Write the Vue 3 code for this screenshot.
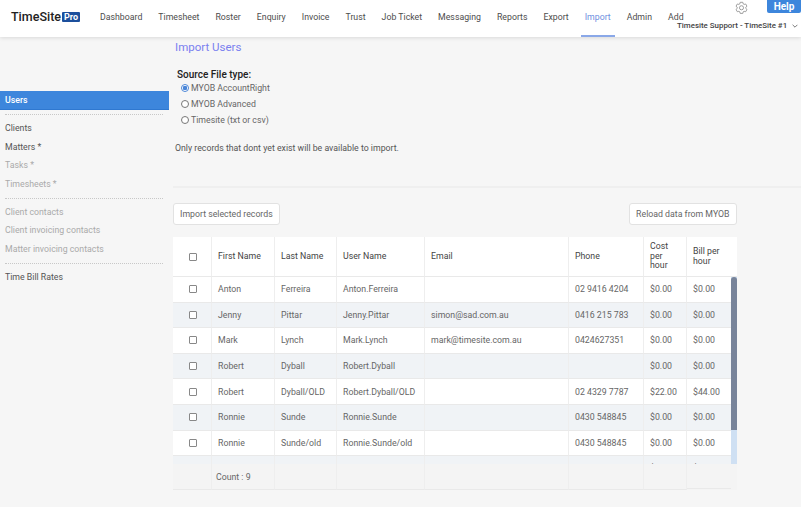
<template>
  <div class="page">
    <header class="topbar">
      <div class="logo">TimeSite<span class="logo-pro">Pro</span></div>
      <nav class="nav">
        <a v-for="item in navItems" :key="item" class="nav-item" :class="{ active: item === 'Import' }">{{ item }}</a>
      </nav>
      <div class="account">
        <div class="account-top">
          <svg class="gear" viewBox="0 0 24 24" fill="none" stroke="#8a8a8a" stroke-width="1.5" stroke-linejoin="round">
            <path d="M9.6 2.4h4.8l.7 2.9 1.7 1 2.9-.8 2.4 4.1-2.2 2.1v1.9l2.2 2.1-2.4 4.1-2.9-.8-1.7 1-.7 2.9H9.6l-.7-2.9-1.7-1-2.9.8-2.4-4.1 2.2-2.1v-1.9L1.9 9.6l2.4-4.1 2.9.8 1.7-1z" />
            <circle cx="12" cy="12.5" r="3.8" />
          </svg>
          <button class="help">Help</button>
        </div>
        <div class="account-name">
          <span>Timesite Support - TimeSite #1</span>
          <svg class="chevron" viewBox="0 0 10 6" fill="none" stroke="#555" stroke-width="1.3"><path d="M1 1l4 4 4-4" /></svg>
        </div>
      </div>
    </header>

    <div class="content">
      <aside class="sidebar">
        <div class="side-item selected">Users</div>
        <hr class="side-sep first" />
        <div class="side-item">Clients</div>
        <div class="side-item">Matters *</div>
        <div class="side-item off">Tasks *</div>
        <div class="side-item off">Timesheets *</div>
        <hr class="side-sep" />
        <div class="side-item off">Client contacts</div>
        <div class="side-item off">Client invoicing contacts</div>
        <div class="side-item off">Matter invoicing contacts</div>
        <hr class="side-sep" />
        <div class="side-item">Time Bill Rates</div>
      </aside>

      <main class="main">
        <h1 class="title">Import Users</h1>
        <div class="source-label">Source File type:</div>
        <div class="radios">
          <label v-for="(opt, i) in sourceTypes" :key="opt" class="radio">
            <span class="radio-dot" :class="{ on: i === 0 }"></span>{{ opt }}
          </label>
        </div>
        <p class="note">Only records that dont yet exist will be available to import.</p>
        <div class="divider"></div>

        <div class="actions">
          <button class="btn import">Import selected records</button>
          <button class="btn">Reload data from MYOB</button>
        </div>

        <div class="grid">
          <div class="row head">
            <div class="cell check"><span class="box"></span></div>
            <div class="cell" v-for="h in headers" :key="h">{{ h }}</div>
          </div>
          <div class="rows">
            <div v-for="(r, i) in users" :key="i" class="row body" :class="{ odd: i % 2 === 1 }">
              <div class="cell check"><span class="box"></span></div>
              <div class="cell">{{ r.first }}</div>
              <div class="cell">{{ r.last }}</div>
              <div class="cell">{{ r.user }}</div>
              <div class="cell">{{ r.email }}</div>
              <div class="cell">{{ r.phone }}</div>
              <div class="cell">{{ r.cost }}</div>
              <div class="cell">{{ r.bill }}</div>
            </div>
            <div class="scroll-track"><div class="scroll-thumb"></div></div>
          </div>
          <div class="row foot">
            <div class="cell check"></div>
            <div class="cell count">Count : 9</div>
            <div class="cell"></div>
            <div class="cell"></div>
            <div class="cell"></div>
            <div class="cell"></div>
            <div class="cell"></div>
            <div class="cell"></div>
          </div>
        </div>
      </main>
    </div>
  </div>
</template>

<script setup>
const navItems = ['Dashboard', 'Timesheet', 'Roster', 'Enquiry', 'Invoice', 'Trust', 'Job Ticket', 'Messaging', 'Reports', 'Export', 'Import', 'Admin', 'Add']
const sourceTypes = ['MYOB AccountRight', 'MYOB Advanced', 'Timesite (txt or csv)']
const headers = ['First Name', 'Last Name', 'User Name', 'Email', 'Phone', 'Cost per hour', 'Bill per hour']

const users = [
  { first: 'Anton', last: 'Ferreira', user: 'Anton.Ferreira', email: '', phone: '02 9416 4204', cost: '$0.00', bill: '$0.00' },
  { first: 'Jenny', last: 'Pittar', user: 'Jenny.Pittar', email: 'simon@sad.com.au', phone: '0416 215 783', cost: '$0.00', bill: '$0.00' },
  { first: 'Mark', last: 'Lynch', user: 'Mark.Lynch', email: 'mark@timesite.com.au', phone: '0424627351', cost: '$0.00', bill: '$0.00' },
  { first: 'Robert', last: 'Dyball', user: 'Robert.Dyball', email: '', phone: '', cost: '$0.00', bill: '$0.00' },
  { first: 'Robert', last: 'Dyball/OLD', user: 'Robert.Dyball/OLD', email: '', phone: '02 4329 7787', cost: '$22.00', bill: '$44.00' },
  { first: 'Ronnie', last: 'Sunde', user: 'Ronnie.Sunde', email: '', phone: '0430 548845', cost: '$0.00', bill: '$0.00' },
  { first: 'Ronnie', last: 'Sunde/old', user: 'Ronnie.Sunde/old', email: '', phone: '0430 548845', cost: '$0.00', bill: '$0.00' },
  { first: 'Simon', last: 'Shaw', user: 'Simon.Shaw', email: 'simon.shaw@sad.com.au', phone: '', cost: '$0.00', bill: '$0.00' },
]
</script>

<style scoped>
.page,
.page * {
  box-sizing: border-box;
}

.page {
  width: 801px;
  height: 507px;
  overflow: hidden;
  background: #f6f6f6;
  font-family: Roboto, 'Liberation Sans', sans-serif;
  font-size: 8.75px;
  color: #666;
}

.topbar {
  position: relative;
  height: 37px;
  display: flex;
  align-items: stretch;
  background: #fff;
  box-shadow: 0 1px 4px rgba(0, 0, 0, 0.12);
}

.logo {
  width: 92px;
  padding-left: 11px;
  font-size: 12.5px;
  font-weight: 500;
  color: #222;
  line-height: 34px;
  white-space: nowrap;
}

.logo-pro {
  display: inline-block;
  margin-left: 1px;
  padding: 0 2px;
  background: #1c4f9c;
  color: #fff;
  font-size: 9px;
  font-weight: 700;
  line-height: 10px;
  border-radius: 1px;
  vertical-align: 1px;
}

.nav {
  display: flex;
  white-space: nowrap;
}

.nav-item {
  position: relative;
  padding: 0 8px;
  line-height: 35px;
  color: #4d4d4d;
}

.nav-item.active {
  color: #6f8fe0;
}

.nav-item.active::after {
  content: '';
  position: absolute;
  left: 4px;
  right: 4px;
  bottom: 0;
  height: 2px;
  background: #8aa8e8;
}

.account {
  position: absolute;
  top: 0;
  right: 0;
  width: 124px;
  color: #444;
}

.account-top {
  display: flex;
  justify-content: flex-end;
  align-items: flex-start;
  height: 21px;
}

.gear {
  width: 13px;
  height: 13px;
  margin-top: 1px;
  margin-right: 19px;
}

.help {
  width: 34px;
  height: 13px;
  padding: 0;
  border: 0;
  border-radius: 0 0 2px 2px;
  background: #3d86dc;
  color: #fff;
  font: 700 10px/12px Roboto, sans-serif;
}

.account-name {
  display: flex;
  align-items: center;
  justify-content: space-between;
  padding-right: 3px;
  font-size: 7.9px;
  font-weight: 500;
  white-space: nowrap;
}

.chevron {
  width: 6px;
  height: 4px;
}

.content {
  display: flex;
  height: 470px;
}

.sidebar {
  flex: 0 0 169px;
  padding-top: 54px;
}

.side-item {
  padding-left: 5px;
  height: 18.5px;
  line-height: 18.5px;
  color: #555;
}

.side-item.off {
  color: #aaa;
}

.side-item.selected {
  background: #3d86dc;
  color: #fff;
  font-weight: 500;
  border-bottom: 1px solid #2f78d0;
}

.side-sep {
  margin: 4.5px 6px 4px 5px;
  border: 0;
  border-top: 1px dotted #c8c8c8;
}

.side-sep.first {
  margin-bottom: 4.25px;
}

.main {
  flex: 1;
  min-width: 0;
  padding-left: 4px;
}

.title {
  margin: 3px 0 0 2px;
  font-size: 11.5px;
  font-weight: 400;
  line-height: 14px;
  color: #7a80f0;
}

.source-label {
  margin: 14px 0 0 4px;
  font-size: 10px;
  font-weight: 500;
  line-height: 13px;
  color: #222;
}

.radios {
  margin-left: 8px;
  margin-top: -1px;
}

.radio {
  display: flex;
  align-items: center;
  gap: 2px;
  height: 16px;
  color: #666;
}

.radio-dot {
  width: 8px;
  height: 8px;
  border: 1px solid #777;
  border-radius: 50%;
  background: #fff;
}

.radio-dot.on {
  border-color: #4a86d8;
  background: radial-gradient(circle, #4a86d8 0 2px, #fff 2.5px);
}

.note {
  margin: 13px 0 0 2px;
  line-height: 14px;
  color: #555;
}

.divider {
  margin-top: 31px;
  height: 2px;
  background: #efefef;
}

.actions {
  display: flex;
  justify-content: space-between;
  width: 564px;
  margin-top: 15px;
}

.btn {
  height: 22px;
  padding: 0 6.5px;
  border: 1px solid #e2e2e2;
  border-radius: 3px;
  background: #fff;
  color: #666;
  font: 400 8.75px Roboto, sans-serif;
}

.btn.import {
  padding: 0 6px;
}

.grid {
  width: 564px;
  margin-top: 12px;
}

.row {
  display: grid;
  grid-template-columns: 39px 63px 62px 88px 144px 75px 43px 50px;
}

.cell {
  display: flex;
  align-items: center;
  padding-left: 6px;
  border-right: 1px solid #eee;
  border-bottom: 1px solid #e9e9e9;
}

.cell:last-child {
  border-right: 0;
}

.head .cell {
  padding-right: 6px;
}

.row .check {
  justify-content: center;
  padding: 0 0 0 1px;
}

.box {
  width: 8px;
  height: 8px;
  border: 1px solid #888;
  border-radius: 1px;
  background: #fff;
}

.head {
  height: 40px;
  background: #fff;
  color: #444;
  line-height: 9.5px;
}

.rows {
  position: relative;
  height: 187px;
  overflow: hidden;
}

.body {
  height: 25.6px;
  background: #fff;
}

.body.odd {
  background: #f0f3f6;
}

.scroll-track {
  position: absolute;
  top: 0;
  right: 0;
  bottom: 0;
  width: 6px;
  background: #cfe0f3;
}

.scroll-thumb {
  height: 153px;
  border-radius: 3px 3px 0 0;
  background: #78849a;
}

.foot {
  height: 26px;
  background: #f4f4f4;
}

.foot .cell:last-child {
  border-bottom-color: transparent;
  background: linear-gradient(#e9e9e9, #e9e9e9) left bottom / 44px 1px no-repeat;
}

.count {
  padding-left: 4px;
}
</style>
